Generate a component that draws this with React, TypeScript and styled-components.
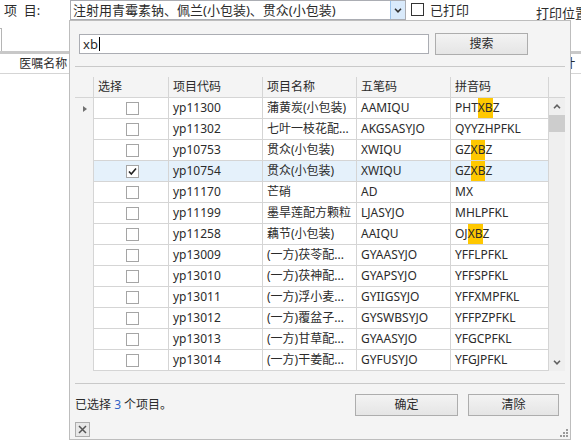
import React from 'react';
import styled, { createGlobalStyle } from 'styled-components';

const Global = createGlobalStyle`
  html, body { margin: 0; padding: 0; background: #fff; }
  body {
    font-family: "Noto Sans", "Noto Sans CJK SC", sans-serif;
    color: #2b2b2b;
    width: 581px;
    height: 446px;
    overflow: hidden;
  }
  * { box-sizing: border-box; }
`;

const Page = styled.div`
  position: relative;
  width: 581px;
  height: 446px;
  overflow: hidden;
  background: #fff;
`;

const TopBar = styled.div`
  display: flex;
  align-items: flex-start;
  height: 20px;
`;

const FieldLabel = styled.div`
  width: 70px;
  padding-left: 4px;
  font-size: 13px;
  line-height: 20px;
  white-space: pre;
`;

const Combo = styled.div`
  display: flex;
  width: 336px;
  height: 20px;
  border: 1px solid #abadb3;
  background: #fff;
`;

const ComboText = styled.div`
  flex: 1;
  padding-left: 2px;
  font-size: 13px;
  line-height: 18px;
  white-space: nowrap;
  overflow: hidden;
`;

const DropBtn = styled.div`
  width: 15px;
  display: flex;
  align-items: center;
  justify-content: center;
  background: #d9eafb;
  border-left: 1px solid #9cc4ec;
`;

const PlainCheck = styled.div`
  width: 13px;
  height: 13px;
  margin: 3px 0 0 5px;
  border: 1px solid #333;
  background: #fff;
`;

const CheckLabel = styled.div`
  margin-left: 6px;
  font-size: 13px;
  line-height: 20px;
`;

const PrintPos = styled.div`
  margin-left: auto;
  width: 45px;
  flex-shrink: 0;
  margin-top: 3px;
  font-size: 13px;
  line-height: 20px;
  white-space: nowrap;
`;

const TabEdge = styled.div`
  margin-top: 8px;
  width: 2px;
  height: 23px;
  border-top: 1px solid #b5b5b5;
  border-right: 1px solid #b5b5b5;
`;

const Band = styled.div`
  height: 3px;
  background: #c8c8c8;
`;

const BackHeader = styled.div`
  display: flex;
  height: 20px;
  border-bottom: 1px solid #d5d5d5;
  font-size: 12px;
  line-height: 19px;
`;

const BackHeadCell = styled.div<{ $w: number; $right?: boolean }>`
  width: ${p => p.$w}px;
  text-align: ${p => (p.$right ? 'right' : 'left')};
  padding-right: ${p => (p.$right ? 1 : 0)}px;
  white-space: nowrap;
`;

const Popup = styled.div`
  position: absolute;
  left: 69px;
  top: 20px;
  width: 502px;
  height: 420px;
  border: 1px solid #bdbdbd;
  background: #f4f4f4;
  padding: 0 5px;
  display: flex;
  flex-direction: column;
`;

const SearchRow = styled.div`
  margin-top: 12px;
  height: 22px;
  display: flex;
  align-items: center;
  padding-left: 4px;
`;

const SearchInput = styled.div`
  width: 350px;
  height: 20px;
  border: 1px solid #abadb3;
  background: #fff;
  font-size: 13px;
  line-height: 18px;
  padding-left: 3px;
  display: flex;
  align-items: center;
`;

const Caret = styled.span`
  display: inline-block;
  width: 1px;
  height: 14px;
  margin-left: 1px;
  background: #000;
`;

const Btn = styled.button<{ $w: number; $ml?: number }>`
  width: ${p => p.$w}px;
  height: 22px;
  margin-left: ${p => p.$ml ?? 0}px;
  padding: 0;
  border: 1px solid #adadad;
  background: linear-gradient(#f3f3f3, #e5e5e5);
  font-family: inherit;
  font-size: 12px;
  color: #2b2b2b;
  line-height: 20px;
`;

const Sep = styled.div<{ $mt: number }>`
  margin-top: ${p => p.$mt}px;
  height: 1px;
  background: #c9c9c9;
  flex-shrink: 0;
`;

const Grid = styled.div`
  margin-top: 10px;
  height: 294px;
  display: flex;
  flex-direction: column;
`;

const HeaderRow = styled.div`
  display: flex;
  height: 21px;
  border-bottom: 1px solid #d5d5d5;
  flex-shrink: 0;
`;

const HeadCell = styled.div<{ $w: number; $line?: boolean }>`
  width: ${p => p.$w}px;
  flex-shrink: 0;
  padding-left: 4px;
  font-size: 12px;
  line-height: 20px;
  white-space: nowrap;
  border-right: ${p => (p.$line === false ? 'none' : '1px solid #d5d5d5')};
`;

const Body = styled.div`
  display: flex;
  height: 273px;
`;

const Rows = styled.div`
  width: 474px;
  display: flex;
  flex-direction: column;
`;

const Row = styled.div`
  display: flex;
  height: 21px;
`;

const RowHead = styled.div`
  width: 19px;
  flex-shrink: 0;
  border-right: 1px solid #d5d5d5;
  display: flex;
  align-items: center;
  justify-content: center;
`;

const Pointer = styled.div`
  width: 0;
  height: 0;
  margin-left: 2px;
  border-left: 4px solid #707070;
  border-top: 3.5px solid transparent;
  border-bottom: 3.5px solid transparent;
`;

const Cell = styled.div<{ $w: number; $sel?: boolean; $center?: boolean }>`
  width: ${p => p.$w}px;
  flex-shrink: 0;
  height: 21px;
  padding-left: ${p => (p.$center ? 0 : 4)}px;
  border-right: 1px solid #d5d5d5;
  border-bottom: 1px solid #d5d5d5;
  background: ${p => (p.$sel ? '#e5f1fb' : '#fff')};
  font-size: 12px;
  line-height: 20px;
  white-space: nowrap;
  overflow: hidden;
  display: flex;
  align-items: center;
  justify-content: ${p => (p.$center ? 'center' : 'flex-start')};
`;

const Box = styled.div`
  width: 13px;
  height: 13px;
  margin-left: 2px;
  border: 1px solid #a5a5a5;
  background: #fff;
  display: flex;
  align-items: center;
  justify-content: center;
`;

const Mark = styled.span`
  background: #ffc800;
`;

const Scrollbar = styled.div`
  width: 16px;
  height: 273px;
  background: #efefef;
  display: flex;
  flex-direction: column;
`;

const ScrollArrow = styled.div`
  height: 17px;
  display: flex;
  align-items: center;
  justify-content: center;
`;

const Thumb = styled.div`
  height: 17px;
  background: #cdcdcd;
`;

const Spacer = styled.div`
  flex: 1;
`;

const Footer = styled.div`
  margin-top: 10px;
  height: 22px;
  display: flex;
  align-items: center;
  padding-right: 6px;
`;

const FooterText = styled.div`
  flex: 1;
  font-size: 12px;
  line-height: 22px;
`;

const Count = styled.span`
  color: #2f62c8;
`;

const CloseBtn = styled.button`
  margin-top: 6px;
  width: 15px;
  height: 15px;
  padding: 0;
  border: 1px solid #adadad;
  background: #e8e8e8;
  display: flex;
  align-items: center;
  justify-content: center;
`;

const Grip = styled.svg`
  position: absolute;
  right: 1px;
  bottom: 1px;
`;

type Item = { code: string; name: string; wb: string; py: string; checked?: boolean };

const items: Item[] = [
  { code: 'yp11300', name: '蒲黄炭(小包装)', wb: 'AAMIQU', py: 'PHTXBZ' },
  { code: 'yp11302', name: '七叶一枝花配...', wb: 'AKGSASYJO', py: 'QYYZHPFKL' },
  { code: 'yp10753', name: '贯众(小包装)', wb: 'XWIQU', py: 'GZXBZ' },
  { code: 'yp10754', name: '贯众(小包装)', wb: 'XWIQU', py: 'GZXBZ', checked: true },
  { code: 'yp11170', name: '芒硝', wb: 'AD', py: 'MX' },
  { code: 'yp11199', name: '墨旱莲配方颗粒', wb: 'LJASYJO', py: 'MHLPFKL' },
  { code: 'yp11258', name: '藕节(小包装)', wb: 'AAIQU', py: 'OJXBZ' },
  { code: 'yp13009', name: '(一方)茯苓配...', wb: 'GYAASYJO', py: 'YFFLPFKL' },
  { code: 'yp13010', name: '(一方)茯神配...', wb: 'GYAPSYJO', py: 'YFFSPFKL' },
  { code: 'yp13011', name: '(一方)浮小麦...', wb: 'GYIIGSYJO', py: 'YFFXMPFKL' },
  { code: 'yp13012', name: '(一方)覆盆子...', wb: 'GYSWBSYJO', py: 'YFFPZPFKL' },
  { code: 'yp13013', name: '(一方)甘草配...', wb: 'GYAASYJO', py: 'YFGCPFKL' },
  { code: 'yp13014', name: '(一方)干姜配...', wb: 'GYFUSYJO', py: 'YFGJPFKL' },
];

const COLS = [75, 94, 94, 94, 98];

function highlight(s: string) {
  const i = s.indexOf('XB');
  if (i < 0) return s;
  return (
    <>
      {s.slice(0, i)}
      <Mark>XB</Mark>
      {s.slice(i + 2)}
    </>
  );
}

const Chevron = ({ up, color = '#606060' }: { up?: boolean; color?: string }) => (
  <svg width="8" height="5" viewBox="0 0 8 5">
    <polyline
      points={up ? '1,4.2 4,1.2 7,4.2' : '1,0.8 4,3.8 7,0.8'}
      fill="none"
      stroke={color}
      strokeWidth="1.6"
    />
  </svg>
);

export default function App() {
  return (
    <Page>
      <Global />
      <TopBar>
        <FieldLabel>{'项  目:'}</FieldLabel>
        <Combo>
          <ComboText>注射用青霉素钠、佩兰(小包装)、贯众(小包装)</ComboText>
          <DropBtn>
            <Chevron color="#333" />
          </DropBtn>
        </Combo>
        <PlainCheck />
        <CheckLabel>已打印</CheckLabel>
        <PrintPos>打印位置</PrintPos>
      </TopBar>
      <TabEdge />
      <Band />
      <BackHeader>
        <BackHeadCell $w={69} $right>
          医嘱名称
        </BackHeadCell>
        <BackHeadCell $w={489} />
        <BackHeadCell $w={30}>小计</BackHeadCell>
      </BackHeader>

      <Popup>
        <SearchRow>
          <SearchInput>
            xb
            <Caret />
          </SearchInput>
          <Btn $w={93} $ml={6}>
            搜索
          </Btn>
        </SearchRow>
        <Sep $mt={11} />
        <Grid>
          <HeaderRow>
            <HeadCell $w={19} />
            <HeadCell $w={COLS[0]}>选择</HeadCell>
            <HeadCell $w={COLS[1]}>项目代码</HeadCell>
            <HeadCell $w={COLS[2]}>项目名称</HeadCell>
            <HeadCell $w={COLS[3]}>五笔码</HeadCell>
            <HeadCell $w={COLS[4]}>拼音码</HeadCell>
            <HeadCell $w={16} $line={false} />
          </HeaderRow>
          <Body>
            <Rows>
              {items.map((it, idx) => (
                <Row key={it.code}>
                  <RowHead>{idx === 0 && <Pointer />}</RowHead>
                  <Cell $w={COLS[0]} $sel={it.checked} $center>
                    <Box>
                      {it.checked && (
                        <svg width="9" height="9" viewBox="0 0 9 9">
                          <polyline points="1,4.5 3.3,7 8,1.5" fill="none" stroke="#222" strokeWidth="1.6" />
                        </svg>
                      )}
                    </Box>
                  </Cell>
                  <Cell $w={COLS[1]} $sel={it.checked}>{it.code}</Cell>
                  <Cell $w={COLS[2]} $sel={it.checked}>{it.name}</Cell>
                  <Cell $w={COLS[3]} $sel={it.checked}>{it.wb}</Cell>
                  <Cell $w={COLS[4]} $sel={it.checked}>{highlight(it.py)}</Cell>
                </Row>
              ))}
            </Rows>
            <Scrollbar>
              <ScrollArrow>
                <Chevron up />
              </ScrollArrow>
              <Thumb />
              <Spacer />
              <ScrollArrow>
                <Chevron />
              </ScrollArrow>
            </Scrollbar>
          </Body>
        </Grid>
        <Sep $mt={12} />
        <Footer>
          <FooterText>
            已选择 <Count>3</Count> 个项目。
          </FooterText>
          <Btn $w={103}>确定</Btn>
          <Btn $w={91} $ml={10}>
            清除
          </Btn>
        </Footer>
        <CloseBtn>
          <svg width="9" height="9" viewBox="0 0 9 9">
            <path d="M1 1 L8 8 M8 1 L1 8" stroke="#555" strokeWidth="1.5" />
          </svg>
        </CloseBtn>
        <Grip width="10" height="10" viewBox="0 0 10 10">
          {[
            [8, 2],
            [5, 5],
            [8, 5],
            [2, 8],
            [5, 8],
            [8, 8],
          ].map(([x, y]) => (
            <rect key={`${x}-${y}`} x={x - 1} y={y - 1} width="2" height="2" fill="#9a9a9a" />
          ))}
        </Grip>
      </Popup>
    </Page>
  );
}
